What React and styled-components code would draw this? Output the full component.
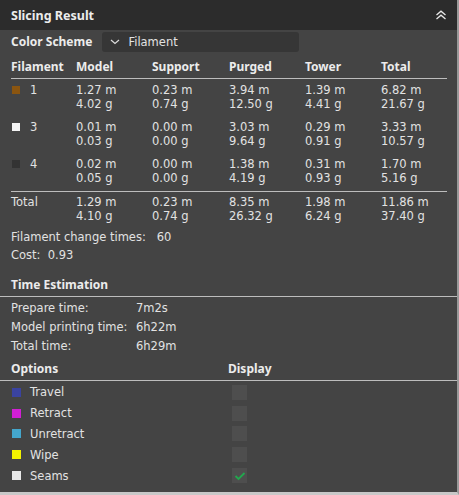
import React from 'react'
import styled, { createGlobalStyle } from 'styled-components'

const GlobalStyle = createGlobalStyle`
  html, body {
    margin: 0;
    padding: 0;
    background: #444444;
  }
  body {
    font-family: "DejaVu Sans", "Noto Sans", sans-serif;
    font-size: 11.5px;
    color: #e2e2e2;
  }
`

const filaments = [
    { id: 1, color: '#8a5510', model: ['1.27 m', '4.02 g'], support: ['0.23 m', '0.74 g'], purged: ['3.94 m', '12.50 g'], tower: ['1.39 m', '4.41 g'], total: ['6.82 m', '21.67 g'] },
    { id: 3, color: '#f4f4f4', model: ['0.01 m', '0.03 g'], support: ['0.00 m', '0.00 g'], purged: ['3.03 m', '9.64 g'], tower: ['0.29 m', '0.91 g'], total: ['3.33 m', '10.57 g'] },
    { id: 4, color: '#333333', model: ['0.02 m', '0.05 g'], support: ['0.00 m', '0.00 g'], purged: ['1.38 m', '4.19 g'], tower: ['0.31 m', '0.93 g'], total: ['1.70 m', '5.16 g'] },
]

const totals = { model: ['1.29 m', '4.10 g'], support: ['0.23 m', '0.74 g'], purged: ['8.35 m', '26.32 g'], tower: ['1.98 m', '6.24 g'], total: ['11.86 m', '37.40 g'] }

const options = [
    { name: 'Travel', color: '#3a43a0', on: false },
    { name: 'Retract', color: '#d21fd4', on: false },
    { name: 'Unretract', color: '#44a6cc', on: false },
    { name: 'Wipe', color: '#f2f200', on: false },
    { name: 'Seams', color: '#e8e8e8', on: true },
]

const Panel = styled.div`
    width: 457px;
    height: 492px;
    background: #444444;
    border-right: 2px solid #9a9a9a;
    border-bottom: 3px solid #c8c8c8;
    display: flex;
    flex-direction: column;
    overflow: hidden;
`

const Header = styled.div`
    height: 30px;
    flex-shrink: 0;
    background: #2c2c2c;
    display: flex;
    align-items: center;
    justify-content: space-between;
    padding: 0 10px 0 11px;
    font-family: "Noto Sans", sans-serif;
    font-weight: 700;
    font-size: 12.5px;
    color: #ececec;
`

const Body = styled.div`
    display: flex;
    flex-direction: column;
`

const SchemeRow = styled.div`
    display: flex;
    align-items: center;
    height: 23px;
    padding-left: 11px;
    gap: 10px;
`

const Bold = styled.span`
    font-family: "Noto Sans", sans-serif;
    font-size: 12px;
    font-weight: 700;
    color: #ececec;
`

const Dropdown = styled.div`
    width: 197px;
    height: 20px;
    background: #363636;
    border-radius: 3px;
    display: flex;
    align-items: center;
    gap: 8px;
    padding-left: 8px;
    box-sizing: border-box;
`

const Grid = styled.div`
    display: grid;
    grid-template-columns: 65px 76px 77px 76px 76px 1fr;
    margin: 0 10px 0 11px;
    line-height: 14px;
`

const HeadRow = styled(Grid)`
    font-family: "Noto Sans", sans-serif;
    font-size: 12px;
    font-weight: 700;
    color: #ececec;
    height: 23px;
    align-items: center;
    margin-top: 2px;
    border-bottom: 1px solid #bdbdbd;
`

const DataRow = styled(Grid)`
    padding-top: ${p => p.$top}px;
    padding-bottom: ${p => p.$bottom || 0}px;
    border-bottom: ${p => p.$rule ? '1px solid #bdbdbd' : 'none'};
`

const Cell = styled.div`
    display: flex;
    flex-direction: column;

    span {
        display: block;
        height: 14px;
    }
`

const FilCell = styled.div`
    display: flex;
    align-items: flex-start;
    gap: 10px;
    height: 14px;
`

const Swatch = styled.span`
    width: 8px;
    height: 8px;
    background: ${p => p.$color};
    margin: 3px 0 0 1px;
    flex-shrink: 0;
`

const Line = styled.div`
    padding-left: 11px;
    height: 18px;
    display: flex;
    align-items: center;
    margin-top: ${p => p.$top || 0}px;
`

const Section = styled.div`
    height: 24px;
    display: flex;
    align-items: center;
    padding-left: 11px;
    border-bottom: 1px solid #bdbdbd;
    font-family: "Noto Sans", sans-serif;
    font-size: 12px;
    font-weight: 700;
    color: #ececec;
    margin-top: ${p => p.$top}px;
`

const TimeList = styled.div`
    padding-top: 1px;
`

const TimeRow = styled.div`
    display: grid;
    grid-template-columns: 125px 1fr;
    padding-left: 11px;
    height: 19px;
    align-items: center;
`

const OptionHead = styled(Section)`
    display: grid;
    grid-template-columns: 217px 1fr;
`

const OptionList = styled.div`
    padding-top: 1px;
`

const OptionRow = styled.div`
    display: grid;
    grid-template-columns: 221px 1fr;
    padding-left: 11px;
    height: 20.8px;
    align-items: center;
`

const OptionName = styled.div`
    display: flex;
    align-items: center;
    gap: 9px;
`

const OptSwatch = styled.span`
    width: 9px;
    height: 9px;
    background: ${p => p.$color};
    margin-left: 1px;
`

const Check = styled.span`
    width: 15px;
    height: 15px;
    background: #4e4e4e;
    display: flex;
    align-items: center;
    justify-content: center;
`

const Values = ({ pair }) => (
    <Cell>
        <span>{pair[0]}</span>
        <span>{pair[1]}</span>
    </Cell>
)

const App = () => {
    return (
        <>
            <GlobalStyle />
            <Panel>
                <Header>
                    <span>Slicing Result</span>
                    <svg width="12" height="10" viewBox="0 0 12 10" fill="none" stroke="#e8e8e8" strokeWidth="1.3">
                        <polyline points="1.5,5 6,1.2 10.5,5" />
                        <polyline points="1.5,9 6,5.2 10.5,9" />
                    </svg>
                </Header>
                <Body>
                    <SchemeRow>
                        <Bold>Color Scheme</Bold>
                        <Dropdown>
                            <svg width="10" height="6" viewBox="0 0 10 6" fill="none" stroke="#dcdcdc" strokeWidth="1.2">
                                <polyline points="1,1 5,4.5 9,1" />
                            </svg>
                            <span>Filament</span>
                        </Dropdown>
                    </SchemeRow>

                    <HeadRow>
                        <span>Filament</span>
                        <span>Model</span>
                        <span>Support</span>
                        <span>Purged</span>
                        <span>Tower</span>
                        <span>Total</span>
                    </HeadRow>

                    {filaments.map((f, i) => (
                        <DataRow key={f.id} $top={i === 0 ? 4 : 9} $bottom={i === filaments.length - 1 ? 6 : 0} $rule={i === filaments.length - 1}>
                            <FilCell>
                                <Swatch $color={f.color} />
                                <span>{f.id}</span>
                            </FilCell>
                            <Values pair={f.model} />
                            <Values pair={f.support} />
                            <Values pair={f.purged} />
                            <Values pair={f.tower} />
                            <Values pair={f.total} />
                        </DataRow>
                    ))}

                    <DataRow $top={3}>
                        <span>Total</span>
                        <Values pair={totals.model} />
                        <Values pair={totals.support} />
                        <Values pair={totals.purged} />
                        <Values pair={totals.tower} />
                        <Values pair={totals.total} />
                    </DataRow>

                    <Line $top={5}>Filament change times:&nbsp;&nbsp; 60</Line>
                    <Line>Cost:&nbsp;&nbsp;0.93</Line>

                    <Section $top={8}>Time Estimation</Section>
                    <TimeList>
                        <TimeRow><span>Prepare time:</span><span>7m2s</span></TimeRow>
                        <TimeRow><span>Model printing time:</span><span>6h22m</span></TimeRow>
                        <TimeRow><span>Total time:</span><span>6h29m</span></TimeRow>
                    </TimeList>

                    <OptionHead $top={1}>
                        <span>Options</span>
                        <span>Display</span>
                    </OptionHead>
                    <OptionList>
                        {options.map(o => (
                            <OptionRow key={o.name}>
                                <OptionName>
                                    <OptSwatch $color={o.color} />
                                    <span>{o.name}</span>
                                </OptionName>
                                <Check>
                                    {o.on && (
                                        <svg width="12" height="10" viewBox="0 0 12 10" fill="none" stroke="#22a84e" strokeWidth="1.8">
                                            <polyline points="1.5,5 4.5,8 10.5,2" />
                                        </svg>
                                    )}
                                </Check>
                            </OptionRow>
                        ))}
                    </OptionList>
                </Body>
            </Panel>
        </>
    )
}

export default App
